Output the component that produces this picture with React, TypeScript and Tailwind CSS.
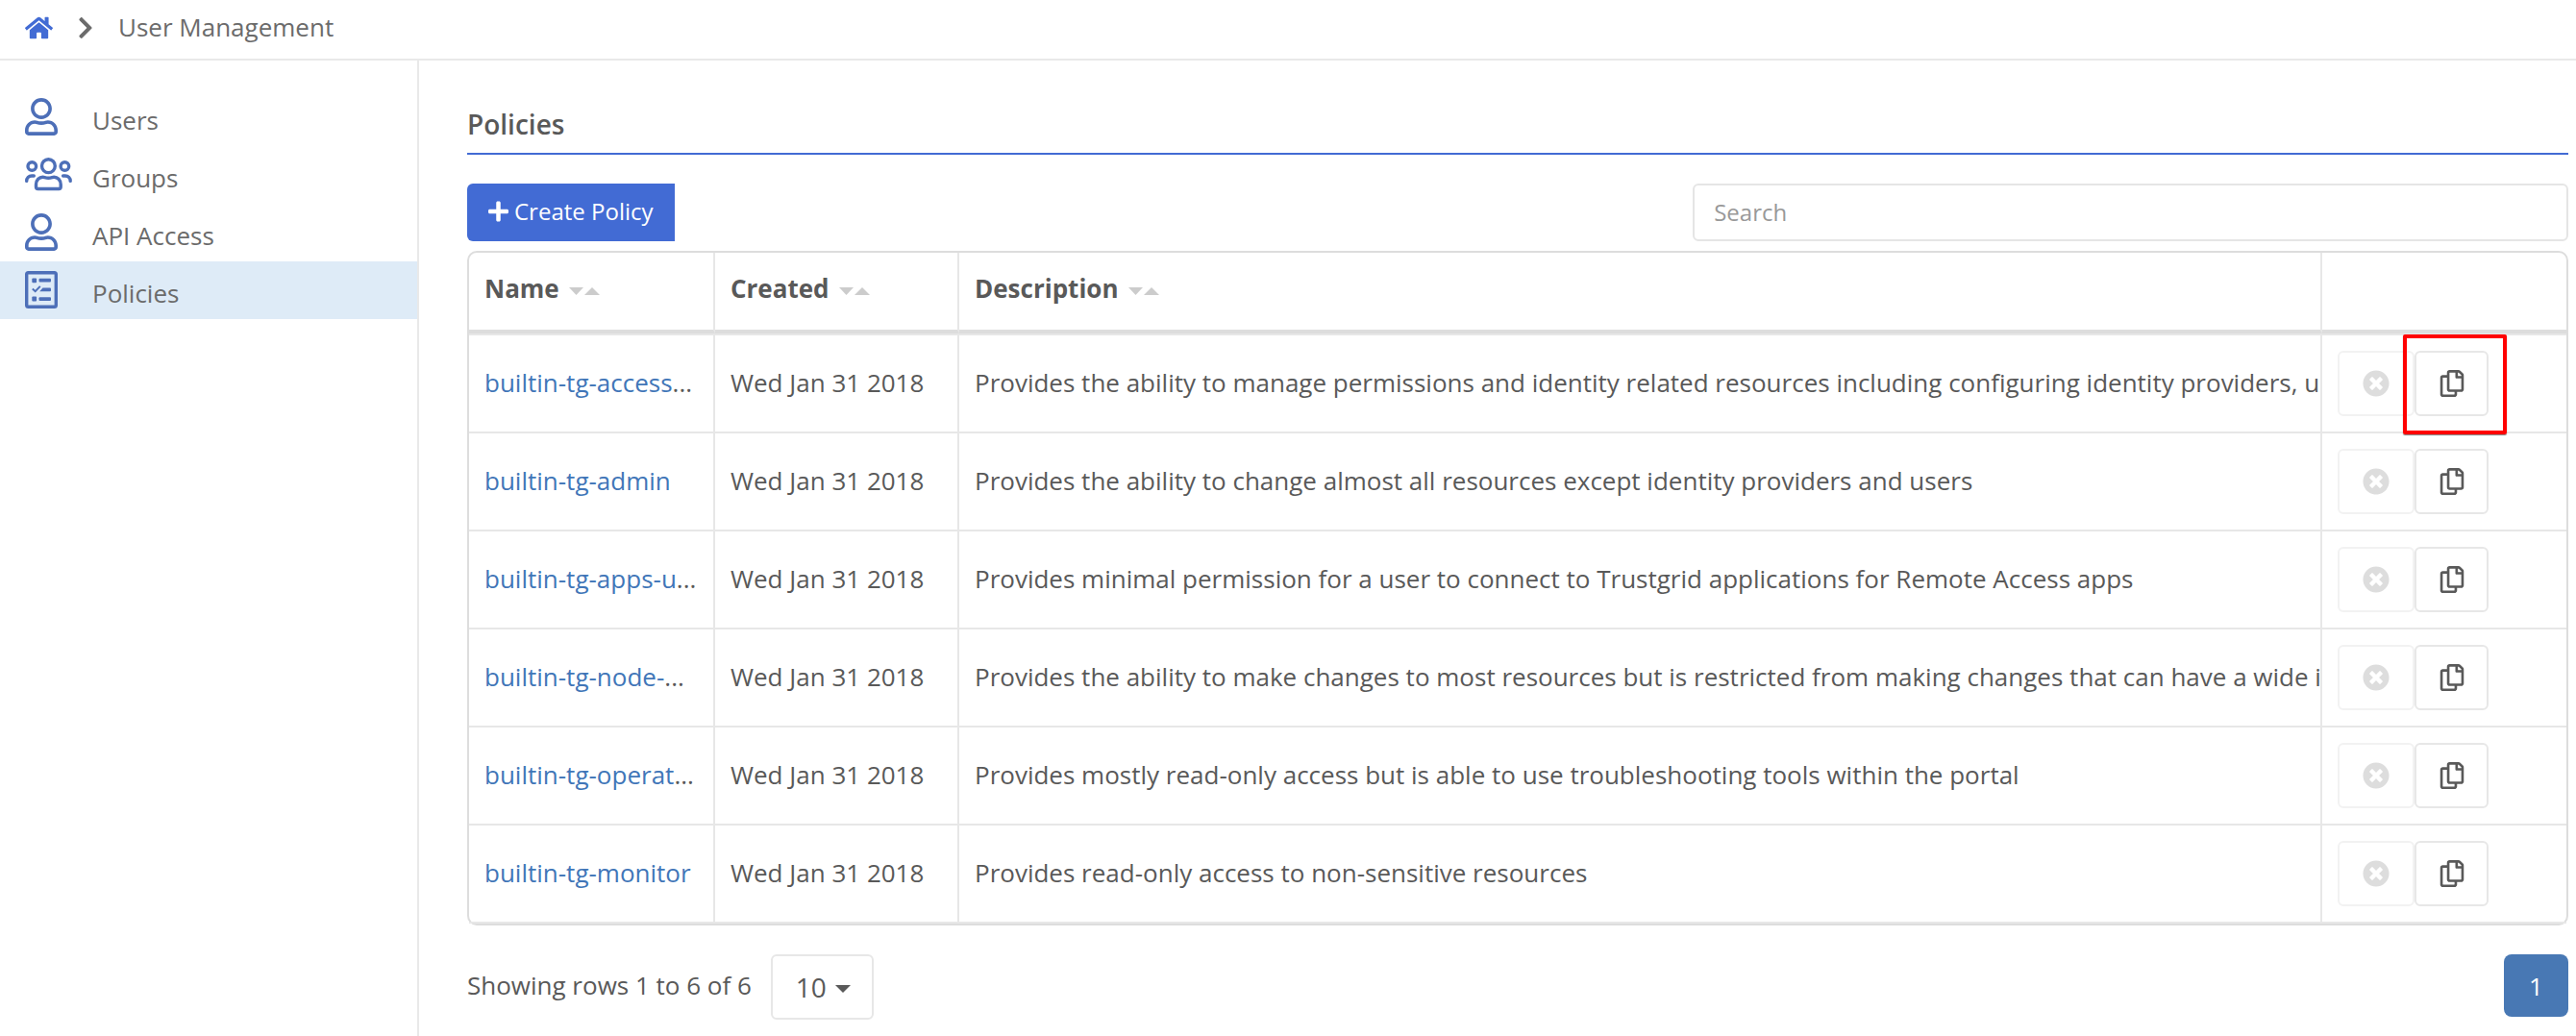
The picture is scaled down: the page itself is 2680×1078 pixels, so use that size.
import React from "react";
import {
  FaChevronRight,
  FaHome,
  FaPlus,
  FaRegCopy,
  FaRegUser,
  FaTimesCircle,
} from "react-icons/fa";

type Policy = { name: string; shortened?: boolean; created: string; description: string; marked?: boolean };

const policies: Policy[] = [
  {
    name: "builtin-tg-access",
    shortened: true,
    created: "Wed Jan 31 2018",
    description:
      "Provides the ability to manage permissions and identity related resources including configuring identity providers, u",
    marked: true,
  },
  {
    name: "builtin-tg-admin",
    created: "Wed Jan 31 2018",
    description: "Provides the ability to change almost all resources except identity providers and users",
  },
  {
    name: "builtin-tg-apps-u",
    shortened: true,
    created: "Wed Jan 31 2018",
    description: "Provides minimal permission for a user to connect to Trustgrid applications for Remote Access apps",
  },
  {
    name: "builtin-tg-node-",
    shortened: true,
    created: "Wed Jan 31 2018",
    description:
      "Provides the ability to make changes to most resources but is restricted from making changes that can have a wide i",
  },
  {
    name: "builtin-tg-operat",
    shortened: true,
    created: "Wed Jan 31 2018",
    description: "Provides mostly read-only access but is able to use troubleshooting tools within the portal",
  },
  {
    name: "builtin-tg-monitor",
    created: "Wed Jan 31 2018",
    description: "Provides read-only access to non-sensitive resources",
  },
];

function GroupsIcon() {
  return (
    <svg viewBox="0 0 49 35" className="h-[35px] w-[49px]" fill="none" stroke="currentColor" strokeWidth="3.4" aria-hidden="true">
      <circle cx="24.4" cy="8.7" r="6.9" />
      <circle cx="7.3" cy="9" r="4.3" />
      <circle cx="41.4" cy="9" r="4.3" />
      <path
        d="M11.5 30.5V28c0-5 3.5-7.8 7-7.8 1.5 0 3 1.1 5.9 1.1s4.3-1.1 5.8-1.1c3.5 0 7 2.8 7 7.8v2.5q0 2-2 2H13.5q-2 0-2-2Z"
        strokeLinejoin="round"
      />
      <path d="M1.7 24.4C1.7 21 4 19 7 19h2.3M47.2 24.4c0-3.4-2.3-5.4-5.3-5.4h-2.3" strokeLinecap="round" />
    </svg>
  );
}

function PoliciesIcon() {
  return (
    <svg viewBox="0 0 34 39" className="h-[39px] w-[34px]" fill="none" stroke="currentColor" aria-hidden="true">
      <rect x="1.7" y="1.7" width="30.6" height="35.6" rx="1.8" strokeWidth="3.4" />
      <g fill="currentColor" stroke="none">
        <rect x="7.3" y="7.4" width="4.8" height="4.8" rx="1" />
        <rect x="14.5" y="7.8" width="12.5" height="3.8" rx="1" />
        <path d="M18.5 17.4H26q1 0 1 1v1.8q0 1-1 1H15.2Z" />
        <rect x="7.3" y="26.6" width="4.8" height="4.8" rx="1" />
        <rect x="14.5" y="27.2" width="12.5" height="3.8" rx="1" />
      </g>
      <path d="m7.8 18.6 2.9 2.6 5.1-5.3" strokeWidth="2" />
    </svg>
  );
}

const navItems = [
  { label: "Users", icon: <FaRegUser className="h-[39px] w-[34px]" /> },
  { label: "Groups", icon: <GroupsIcon /> },
  { label: "API Access", icon: <FaRegUser className="h-[39px] w-[34px]" /> },
  { label: "Policies", icon: <PoliciesIcon />, active: true },
];

function SortHeader({ label }: { label: string }) {
  return (
    <th
      scope="col"
      className="h-[84px] border-r-2 border-b-4 border-r-[#e7e7e7] border-b-[#dddddd] px-4 pb-1.5 text-left font-bold"
    >
      <button type="button" className="flex items-center gap-2.5">
        {label}
        <svg viewBox="0 0 32 8" className="mt-1.5 h-2 w-8" fill="#cccccc" aria-hidden="true">
          <path d="M0 0h15L7.5 8ZM16 8h16L24 0Z" />
        </svg>
      </button>
    </th>
  );
}

export default function App() {
  return (
    <div className="flex min-h-screen flex-col bg-white font-['Open_Sans',sans-serif] text-[26px] leading-9 text-[#595959]">
      <nav aria-label="Breadcrumb" className="flex h-[63px] items-center gap-[26px] border-b-2 border-[#e9e9e9] px-[26px] pb-1 text-[#6b6b6b]">
        <a href="#home" aria-label="Home" className="text-[#426bd4]">
          <FaHome className="h-[26px] w-[29px]" />
        </a>
        <FaChevronRight className="h-[26px] w-4" />
        <span className="pb-0.5">User Management</span>
      </nav>

      <div className="flex flex-1">
        <aside className="w-[436px] shrink-0 border-r-2 border-[#e9e9e9] pt-[29px]">
          <ul>
            {navItems.map((item) => (
              <li key={item.label}>
                <a
                  href={"#" + item.label}
                  className={
                    item.active
                      ? "flex h-[60px] items-center bg-[#deebf7] pl-[26px] text-[#6b6b6b]"
                      : "flex h-[60px] items-center pl-[26px] text-[#6b6b6b]"
                  }
                >
                  <span className="w-[70px] pb-px text-[#4d6fb8]">{item.icon}</span>
                  <span className="mt-1.5">{item.label}</span>
                </a>
              </li>
            ))}
          </ul>
        </aside>

        <main className="min-w-0 flex-1 pt-[46px] pr-2 pl-[50px]">
          <h1 className="border-b-2 border-[#426bd4] pb-2.5 text-[28px] leading-10 font-semibold">Policies</h1>

          <div className="mt-[30px] flex items-center justify-between">
            <button
              type="button"
              className="flex h-[60px] items-center gap-1.5 rounded-l-md bg-[#426bd4] px-[22px] pb-0.5 text-2xl text-white"
            >
              <FaPlus className="h-6 w-[21px]" />
              Create Policy
            </button>
            <input
              type="text"
              aria-label="Search"
              placeholder="Search"
              className="h-[60px] w-5/12 rounded-md border-2 border-[#e5e5e5] px-5 pb-0.5 text-2xl placeholder:text-[#999999]"
            />
          </div>

          <table className="mt-2.5 w-full table-fixed border-separate border-spacing-0 rounded-[10px] border-2 border-[#dddddd]">
            <colgroup>
              <col className="w-[256px]" />
              <col className="w-[254px]" />
              <col />
              <col className="w-[254px]" />
            </colgroup>
            <thead>
              <tr>
                <SortHeader label="Name" />
                <SortHeader label="Created" />
                <SortHeader label="Description" />
                <td className="border-b-4 border-[#dddddd]" />
              </tr>
            </thead>
            <tbody className="[&>tr:last-child>td]:h-[104px] [&>tr:last-child>td]:border-b-2">
              {policies.map((policy) => (
                <tr key={policy.name}>
                  <td className="h-[102px] border-t-2 border-r-2 border-[#e7e7e7] pb-0.5 pl-4 whitespace-nowrap">
                    <a href={"#" + policy.name} className="text-[#4176b8]">
                      {policy.name}
                    </a>
                    {policy.shortened && "..."}
                  </td>
                  <td className="border-t-2 border-r-2 border-[#e7e7e7] px-4 pb-0.5 whitespace-nowrap">
                    {policy.created}
                  </td>
                  <td className="overflow-hidden border-t-2 border-r-2 border-[#e7e7e7] pb-0.5 pl-4 whitespace-nowrap">
                    {policy.description}
                  </td>
                  <td className="border-t-2 border-[#e7e7e7] px-4">
                    <div className="flex">
                      <button
                        type="button"
                        disabled
                        aria-label={"Delete " + policy.name}
                        className="flex h-[68px] w-20 items-center justify-center rounded-md border-2 border-[#f2f2f2] text-[#dddddd]"
                      >
                        <FaTimesCircle className="size-7" />
                      </button>
                      <div className="relative">
                        <button
                          type="button"
                          aria-label={"Copy " + policy.name}
                          className="flex h-[68px] w-[77px] items-center justify-center rounded-md border-2 border-[#e7e7e7]"
                        >
                          <FaRegCopy className="size-7" />
                        </button>
                        {policy.marked && (
                          <div className="pointer-events-none absolute -top-[17px] -right-[19px] -bottom-[19px] -left-3 rounded-xs border-4 border-[#ff0000] shadow-[0_1px_1px_rgba(0,0,0,0.5)]" />
                        )}
                      </div>
                    </div>
                  </td>
                </tr>
              ))}
            </tbody>
          </table>

          <div className="mt-[30px] flex items-start">
            <p className="leading-16">Showing rows 1 to 6 of 6</p>
            <div className="relative ml-5">
              <select
                aria-label="Rows per page"
                defaultValue="10"
                className="h-[68px] w-[107px] appearance-none rounded-md border-2 border-[#e7e7e7] bg-white pl-6 text-[28px]"
              >
                <option value="10">10</option>
              </select>
              <svg viewBox="0 0 16 8" className="pointer-events-none absolute top-8 right-6 h-2 w-4" fill="currentColor" aria-hidden="true">
                <path d="M0 0h16L8 8Z" />
              </svg>
            </div>
            <button type="button" aria-current="page" className="ml-auto h-[65px] w-[67px] rounded-lg bg-[#4878b4] text-white">
              1
            </button>
          </div>
        </main>
      </div>
    </div>
  );
}
